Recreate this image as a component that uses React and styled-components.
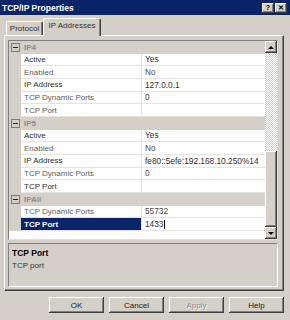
import React from 'react'
import styled, { createGlobalStyle } from 'styled-components'

const sections = [
  {
    name: 'IP4',
    rows: [
      { label: 'Active', value: 'Yes' },
      { label: 'Enabled', value: 'No', muted: true },
      { label: 'IP Address', value: '127.0.0.1' },
      { label: 'TCP Dynamic Ports', value: '0', muted: true },
      { label: 'TCP Port', value: '', muted: true },
    ],
  },
  {
    name: 'IP5',
    rows: [
      { label: 'Active', value: 'Yes' },
      { label: 'Enabled', value: 'No', muted: true },
      { label: 'IP Address', value: 'fe80::5efe:192.168.10.250%14' },
      { label: 'TCP Dynamic Ports', value: '0', muted: true },
      { label: 'TCP Port', value: '' },
    ],
  },
  {
    name: 'IPAll',
    rows: [
      { label: 'TCP Dynamic Ports', value: '55732', muted: true },
      { label: 'TCP Port', value: '1433', selected: true },
    ],
  },
]

const App = () => {
  return (
    <Window>
      <GlobalStyle />
      <TitleBar>
        <Title>TCP/IP Properties</Title>
        <Caption>
          <CapButton>?</CapButton>
          <CapButton>✕</CapButton>
        </Caption>
      </TitleBar>

      <Body>
        <Tabs>
          <Tab>Protocol</Tab>
          <Tab $active>IP Addresses</Tab>
        </Tabs>
        <Panel>
          <Grid>
            <Rows>
              {sections.map((s) => (
                <React.Fragment key={s.name}>
                  <Header>
                    <Gutter><Toggle /></Gutter>
                    <HeaderName>{s.name}</HeaderName>
                  </Header>
                  {s.rows.map((r, i) => (
                    <Row key={i}>
                      <Gutter />
                      <Label $muted={r.muted} $selected={r.selected}>{r.label}</Label>
                      <Value $muted={r.muted}>
                        {r.value}
                        {r.selected && <Caret />}
                      </Value>
                    </Row>
                  ))}
                </React.Fragment>
              ))}
            </Rows>
            <Scrollbar>
              <ScrollButton><Arrow /></ScrollButton>
              <Track>
                <Thumb />
              </Track>
              <ScrollButton><Arrow $down /></ScrollButton>
            </Scrollbar>
          </Grid>
          <Description>
            <DescTitle>TCP Port</DescTitle>
            <DescText>TCP port</DescText>
          </Description>
        </Panel>
        <Buttons>
          <Button>OK</Button>
          <Button>Cancel</Button>
          <Button disabled>Apply</Button>
          <Button>Help</Button>
        </Buttons>
      </Body>
    </Window>
  )
}

export default App

const GlobalStyle = createGlobalStyle`
  html, body {
    margin: 0;
    padding: 0;
    background: #d4d0c8;
  }
  body {
    font-family: "Liberation Sans", Arial, sans-serif;
    font-size: 8px;
    color: #000;
  }
  * { box-sizing: border-box; }
`

const Window = styled.div`
  width: 290px;
  height: 320px;
  display: flex;
  flex-direction: column;
  background: #d4d0c8;
  overflow: hidden;
`

const TitleBar = styled.div`
  height: 15px;
  background: #0a246a;
  display: flex;
  align-items: center;
  justify-content: space-between;
  padding: 0 3px 0 2px;
`

const Title = styled.div`
  color: #fff;
  font-weight: bold;
  font-size: 8.5px;
`

const Caption = styled.div`
  display: flex;
  gap: 1px;
`

const CapButton = styled.div`
  width: 12px;
  height: 10px;
  background: #d4d0c8;
  box-shadow: inset -1px -1px #404040, inset 1px 1px #fff, inset -2px -2px #808080;
  display: grid;
  place-items: center;
  font-size: 7px;
  font-weight: bold;
  line-height: 1;
  color: #000;
`

const Body = styled.div`
  flex: 1;
  display: flex;
  flex-direction: column;
  padding: 3px 6px 0 4px;
`

const Tabs = styled.div`
  height: 17px;
  display: flex;
  align-items: flex-end;
  padding-left: 2px;
`

const Tab = styled.div`
  height: ${(p) => (p.$active ? '18px' : '14px')};
  width: ${(p) => (p.$active ? '58px' : '37px')};
  margin-bottom: ${(p) => (p.$active ? '-1px' : '0')};
  position: relative;
  z-index: ${(p) => (p.$active ? 1 : 0)};
  background: #d4d0c8;
  border-top: 1px solid #fff;
  border-left: 1px solid #fff;
  border-right: 1px solid #404040;
  box-shadow: inset -1px 0 #808080;
  border-radius: 2px 2px 0 0;
  display: flex;
  justify-content: center;
  padding-top: 2px;
  font-size: 8px;
  color: #333;
`

const Panel = styled.div`
  height: 256px;
  display: flex;
  flex-direction: column;
  gap: 3px;
  border-top: 1px solid #fff;
  border-left: 1px solid #fff;
  border-right: 1px solid #404040;
  border-bottom: 1px solid #404040;
  box-shadow: inset -1px -1px #808080;
  padding: 4px 5px 3px 3px;
`

const Grid = styled.div`
  height: 200px;
  display: flex;
  background: #fff;
  border-top: 1px solid #808080;
  border-left: 1px solid #808080;
  border-right: 1px solid #e0ded8;
  border-bottom: 1px solid #e0ded8;
`

const Rows = styled.div`
  flex: 1;
  display: flex;
  flex-direction: column;
`

const Row = styled.div`
  height: 12.67px;
  display: grid;
  grid-template-columns: 12px 121px 1fr;
  flex-shrink: 0;
`

const Header = styled(Row)`
  background: #d4d0c8;
  grid-template-columns: 12px 1fr;
`

const Gutter = styled.div`
  background: #d4d0c8;
  display: grid;
  place-items: center;
`

const Toggle = styled.div`
  width: 9px;
  height: 9px;
  border: 1px solid #7a7a7a;
  position: relative;
  &::after {
    content: '';
    position: absolute;
    left: 1px;
    right: 1px;
    top: 3px;
    height: 1px;
    background: #222;
  }
`

const HeaderName = styled.div`
  font-weight: bold;
  color: #8c8c8c;
  padding-left: 3px;
  display: flex;
  align-items: center;
`

const Label = styled.div`
  display: flex;
  align-items: center;
  padding-left: 3px;
  border-bottom: 1px solid #e6e4de;
  border-right: 1px solid #e6e4de;
  white-space: nowrap;
  overflow: hidden;
  background: ${(p) => (p.$selected ? '#0a246a' : '#fff')};
  color: ${(p) => (p.$selected ? '#fff' : p.$muted ? '#5c5c5c' : '#303030')};
  font-weight: ${(p) => (p.$selected ? 'bold' : 'normal')};
`

const Value = styled.div`
  display: flex;
  align-items: center;
  padding-left: 3px;
  border-bottom: 1px solid #e6e4de;
  white-space: nowrap;
  overflow: hidden;
  color: ${(p) => (p.$muted ? '#4a4a4a' : '#303030')};
  font-size: 8.3px;
`

const Caret = styled.span`
  display: inline-block;
  width: 1px;
  height: 9px;
  background: #000;
  margin-left: 1px;
`

const Scrollbar = styled.div`
  width: 12px;
  display: flex;
  flex-direction: column;
`

const ScrollButton = styled.div`
  height: 12px;
  background: #d4d0c8;
  box-shadow: inset -1px -1px #404040, inset 1px 1px #fff, inset -2px -2px #808080;
  display: grid;
  place-items: center;
`

const Arrow = styled.div`
  width: 0;
  height: 0;
  border-left: 3px solid transparent;
  border-right: 3px solid transparent;
  ${(p) => (p.$down ? 'border-top: 3px solid #000;' : 'border-bottom: 3px solid #000;')}
`

const Track = styled.div`
  flex: 1;
  display: flex;
  flex-direction: column;
  justify-content: flex-end;
  background-color: #ece9e4;
  background-image: repeating-conic-gradient(#d4d0c8 0 25%, #fff 0 50%);
  background-size: 2px 2px;
`

const Thumb = styled.div`
  height: 76px;
  background: #d4d0c8;
  box-shadow: inset -1px -1px #404040, inset 1px 1px #fff, inset -2px -2px #808080;
`

const Description = styled.div`
  height: 44px;
  border-top: 1px solid #808080;
  border-left: 1px solid #808080;
  border-right: 1px solid #fff;
  border-bottom: 1px solid #fff;
  padding: 4px 3px;
  display: flex;
  flex-direction: column;
  gap: 3px;
`

const DescTitle = styled.div`
  font-weight: bold;
  font-size: 8.5px;
`

const DescText = styled.div`
  font-size: 8px;
  color: #333;
`

const Buttons = styled.div`
  display: flex;
  justify-content: flex-end;
  gap: 5px;
  padding: 6px 0 0 0;
`

const Button = styled.button`
  width: 55px;
  height: 16px;
  padding: 0;
  border: none;
  background: #d4d0c8;
  box-shadow: inset -1px -1px #404040, inset 1px 1px #fff, inset -2px -2px #808080;
  font-family: "Liberation Sans", Arial, sans-serif;
  font-size: 8px;
  color: #222;
  &:disabled {
    color: #8a8a8a;
    text-shadow: 1px 1px #fff;
  }
`
